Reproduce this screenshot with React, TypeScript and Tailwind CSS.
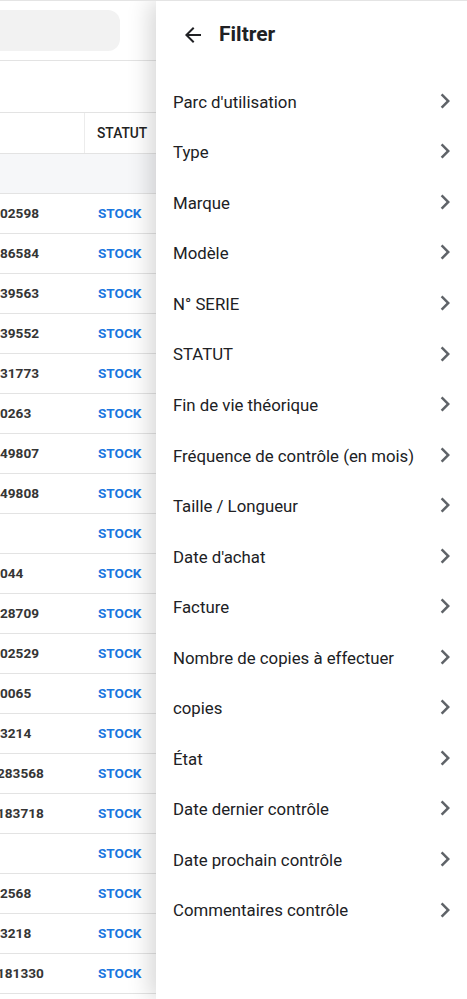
import React from "react";

const rows: { num: string; statut: string }[] = [
  { num: "02598", statut: "STOCK" },
  { num: "86584", statut: "STOCK" },
  { num: "39563", statut: "STOCK" },
  { num: "39552", statut: "STOCK" },
  { num: "31773", statut: "STOCK" },
  { num: "0263", statut: "STOCK" },
  { num: "49807", statut: "STOCK" },
  { num: "49808", statut: "STOCK" },
  { num: "", statut: "STOCK" },
  { num: "044", statut: "STOCK" },
  { num: "28709", statut: "STOCK" },
  { num: "02529", statut: "STOCK" },
  { num: "0065", statut: "STOCK" },
  { num: "3214", statut: "STOCK" },
  { num: "283568", statut: "STOCK" },
  { num: "183718", statut: "STOCK" },
  { num: "", statut: "STOCK" },
  { num: "2568", statut: "STOCK" },
  { num: "3218", statut: "STOCK" },
  { num: "181330", statut: "STOCK" },
  { num: "", statut: "" },
];

const filters = [
  "Parc d'utilisation",
  "Type",
  "Marque",
  "Modèle",
  "N° SERIE",
  "STATUT",
  "Fin de vie théorique",
  "Fréquence de contrôle (en mois)",
  "Taille / Longueur",
  "Date d'achat",
  "Facture",
  "Nombre de copies à effectuer",
  "copies",
  "État",
  "Date dernier contrôle",
  "Date prochain contrôle",
  "Commentaires contrôle",
];

function ChevronRight() {
  return (
    <svg width="30" height="30" viewBox="0 0 24 24" fill="#5f6368" aria-hidden="true">
      <path d="M10 6L8.59 7.41 13.17 12l-4.58 4.59L10 18l6-6z" />
    </svg>
  );
}

function ArrowBack() {
  return (
    <svg width="24" height="24" viewBox="0 0 24 24" fill="#202124" aria-hidden="true">
      <path d="M20 11H7.83l5.59-5.59L12 4l-8 8 8 8 1.41-1.41L7.83 13H20v-2z" />
    </svg>
  );
}

export default function App() {
  return (
    <div
      className="relative w-[467px] h-[999px] overflow-hidden bg-white border-t border-[#e4e4e4]"
      style={{ fontFamily: "Roboto, 'Noto Sans', 'Liberation Sans', sans-serif" }}
    >
      {/* Background page */}
      <div className="flex flex-col">
        <div className="h-[60px] border-b border-[#e3e3e3] pt-[9px]">
          <div className="h-[41px] w-[160px] -ml-[40px] rounded-[12px] bg-[#f2f2f2]" />
        </div>
        <div className="h-[52px] border-b border-[#e3e3e3]" />
        <div className="flex h-[41px] border-b border-[#e3e3e3]">
          <div className="w-[84px]" />
          <div className="flex items-center border-l border-[#ececec] pl-[12px] text-[13.8px] font-medium text-[#222]">
            STATUT
          </div>
        </div>
        <div className="h-[40px] border-b border-[#e3e3e3] bg-[#f6f7f9]" />
        {rows.map((r, i) => (
          <div key={i} className="flex h-[40px] items-center border-b border-[#e3e3e3] text-[13.6px] font-bold">
            <div className="w-[84px] overflow-hidden whitespace-nowrap text-[#353535]">
              <span className={r.num.length > 5 ? "-ml-[3px]" : ""}>{r.num}</span>
            </div>
            <div className="pl-[14px] text-[#1976e0]">{r.statut}</div>
          </div>
        ))}
      </div>

      {/* Drawer */}
      <div className="absolute top-0 bottom-0 right-0 w-[311px] bg-white shadow-[-6px_0_22px_rgba(0,0,0,0.16)]">
        <div className="flex h-[68px] items-center pl-[25px]">
          <ArrowBack />
          <span className="ml-[14px] text-[21px] font-bold text-[#202124]">Filtrer</span>
        </div>
        <div className="flex flex-col pt-[8px]">
          {filters.map((f) => (
            <div key={f} className="flex h-[50.55px] items-center justify-between pl-[17px] pr-[7px]">
              <span className="text-[16.8px] text-[#202124]">{f}</span>
              <span className="-mt-[3px]">
                <ChevronRight />
              </span>
            </div>
          ))}
        </div>
      </div>
    </div>
  );
}
